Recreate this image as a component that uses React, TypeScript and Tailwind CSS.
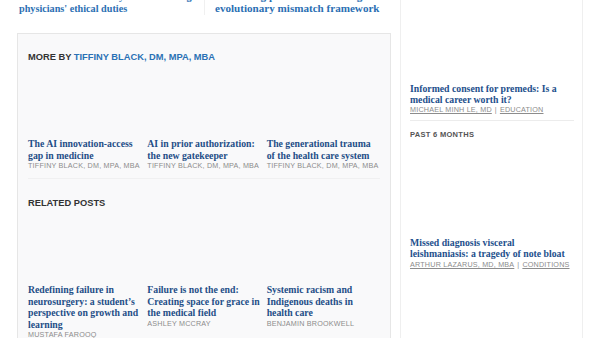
import React from 'react';

type Post = { title: string; author: string };

const moreBy: Post[] = [
  { title: 'The AI innovation-access gap in medicine', author: 'Tiffiny Black, DM, MPA, MBA' },
  { title: 'AI in prior authorization: the new gatekeeper', author: 'Tiffiny Black, DM, MPA, MBA' },
  { title: 'The generational trauma of the health care system', author: 'Tiffiny Black, DM, MPA, MBA' },
];

const related: Post[] = [
  {
    title: "Redefining failure in neurosurgery: a student\u2019s perspective on growth and learning",
    author: 'Mustafa Farooq',
  },
  { title: 'Failure is not the end: Creating space for grace in the medical field', author: 'Ashley McCray' },
  { title: 'Systemic racism and Indigenous deaths in health care', author: 'Benjamin Brookwell' },
];

const serif = "font-['Liberation_Serif',serif]";
const sans = "font-['Liberation_Sans',Arial,sans-serif]";
const meta = `${sans} uppercase whitespace-nowrap text-[7.2px] leading-[10px] tracking-[0.2px] text-[#8c8c8c]`;

const PostCard: React.FC<{ post: Post }> = ({ post }) => (
  <div className="flex flex-col">
    {/* image didn't load, keep its box */}
    <div className="h-[67px]" />
    <a className={`${serif} font-bold text-[9.75px] leading-[11.5px] text-[#1e4e87]`}>{post.title}</a>
    <span className={meta}>{post.author}</span>
  </div>
);

const SidebarItem: React.FC<{ title: string; author: string; category: string; imageH: string }> = ({
  title,
  author,
  category,
  imageH,
}) => (
  <div className="flex flex-col">
    <div className={imageH} />
    <a className={`${serif} font-bold text-[9.75px] leading-[10.7px] text-[#1d4f8c]`}>{title}</a>
    <div className={meta}>
      <span className="underline">{author}</span>
      <span className="mx-[3px]">|</span>
      <span className="underline">{category}</span>
    </div>
  </div>
);

export default function App() {
  return (
    <div className="w-[600px] h-[338px] overflow-hidden bg-white">
      <div className="flex px-[17px] gap-[9px] h-full">
        {/* Main column */}
        <main className="w-[374px] flex flex-col shrink-0">
          <div className="grid grid-cols-2 -mt-[9px]">
            <a
              className={`${serif} font-bold text-[10.2px] leading-[11.5px] text-[#2b6fb3] pl-[2px] pb-[1px] overflow-hidden whitespace-nowrap`}
            >
              The service of humanity: Recommitting to
              <br />
              physicians&apos; ethical duties
            </a>
            <a
              className={`${serif} font-bold text-[11.1px] leading-[11.5px] text-[#2b6fb3] pl-[10px] pb-[1px] border-l border-[#f0f0f0]`}
            >
              Reframing patient trust through the evolutionary mismatch framework
            </a>
          </div>

          <div className="mt-[18px] flex-1 bg-[#f9f9fa] border border-[#e6e6e6] px-[10px] pt-[17px]">
            <section className="pb-[7px] border-b border-[#f0f0f1]">
              <h2 className={`${sans} font-bold uppercase text-[9.3px] leading-[12px] text-[#333]`}>
                More by <a className="text-[#2a71b5]">Tiffiny Black, DM, MPA, MBA</a>
              </h2>
              <div className="grid grid-cols-3 gap-[6px] mt-[8px]">
                {moreBy.map((p) => (
                  <PostCard key={p.title} post={p} />
                ))}
              </div>
            </section>

            <section className="pt-[18px]">
              <h2 className={`${sans} font-bold uppercase text-[9.3px] leading-[12px] text-[#333]`}>Related posts</h2>
              <div className="grid grid-cols-3 gap-[6px] mt-[8px]">
                {related.map((p) => (
                  <PostCard key={p.title} post={p} />
                ))}
              </div>
            </section>
          </div>
        </main>

        {/* Sidebar */}
        <aside className="w-[183px] shrink-0 border-x border-[#efefef] px-[9px]">
          <SidebarItem
            title="Informed consent for premeds: Is a medical career worth it?"
            author="Michael Minh Le, MD"
            category="Education"
            imageH="h-[84px]"
          />
          <div className="mt-[5px] border-t border-[#ececec] w-[164px]" />
          <h3 className={`${sans} font-bold uppercase text-[7.5px] leading-[10px] tracking-[0.3px] text-[#555] mt-[9px]`}>
            Past 6 months
          </h3>
          <SidebarItem
            title="Missed diagnosis visceral leishmaniasis: a tragedy of note bloat"
            author="Arthur Lazarus, MD, MBA"
            category="Conditions"
            imageH="h-[98px]"
          />
        </aside>
      </div>
    </div>
  );
}
